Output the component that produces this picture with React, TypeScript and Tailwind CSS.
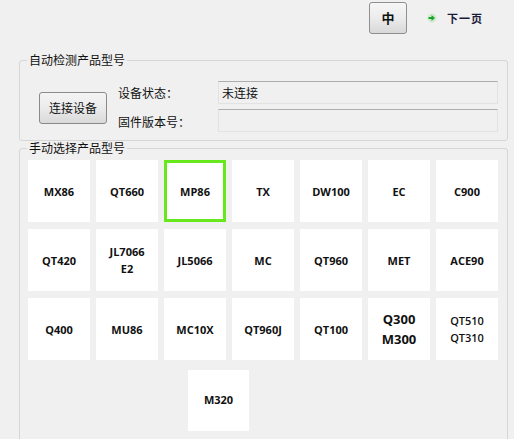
import React from "react";

const cjk = "font-['Microsoft_YaHei','Noto_Sans_CJK_SC',sans-serif]";

type Tile = { lines: string[]; size?: string; selected?: boolean };

const tiles: Tile[] = [
  { lines: ["MX86"] },
  { lines: ["QT660"] },
  { lines: ["MP86"], selected: true },
  { lines: ["TX"] },
  { lines: ["DW100"] },
  { lines: ["EC"] },
  { lines: ["C900"] },
  { lines: ["QT420"] },
  { lines: ["JL7066", "E2"] },
  { lines: ["JL5066"] },
  { lines: ["MC"] },
  { lines: ["QT960"] },
  { lines: ["MET"] },
  { lines: ["ACE90"] },
  { lines: ["Q400"] },
  { lines: ["MU86"] },
  { lines: ["MC10X"] },
  { lines: ["QT960J"] },
  { lines: ["QT100"] },
  { lines: ["Q300", "M300"], size: "big" },
  { lines: ["QT510", "QT310"], size: "small" },
];

function TileBox({ t }: { t: Tile }) {
  const textCls =
    t.size === "big"
      ? "text-[13px] leading-[20px]"
      : t.size === "small"
      ? "text-[11px] leading-[17px] font-semibold"
      : "text-[11px] leading-[17px]";
  return (
    <div
      className={
        "w-[62px] h-[62px] bg-white flex flex-col items-center justify-center text-[#111] font-bold font-['Open_Sans',sans-serif] " +
        (t.selected ? "border-[3px] border-[#66e81c]" : "")
      }
    >
      {t.lines.map((l) => (
        <div key={l} className={textCls}>
          {l}
        </div>
      ))}
    </div>
  );
}

export default function App() {
  return (
    <div className={"w-[514px] h-[439px] bg-[#f0f0f0] overflow-hidden text-[12px] text-[#111] " + cjk}>
      {/* top bar */}
      <div className="flex items-center pl-[369px] pt-[2px] h-[34px]">
        <button className="w-[38px] h-[32px] rounded-[3px] border border-[#8f8f8f] bg-gradient-to-b from-[#f6f6f6] via-[#ececec] to-[#d8d8d8] text-[13px] font-bold flex items-center justify-center">
          中
        </button>
        <svg width="10" height="10" viewBox="0 0 10 10" className="ml-[20px]">
          <circle cx="5" cy="5" r="4.5" fill="#bfe8bf" opacity="0.6" />
          <path d="M1.5 5h4.5" stroke="#1aa52a" strokeWidth="2" />
          <path d="M4.5 2l3.5 3-3.5 3z" fill="#1aa52a" />
        </svg>
        <span className="ml-[10px] text-[11px] font-bold text-[#1a1a3a] tracking-[1px]">下一页</span>
      </div>

      {/* group 1 */}
      <fieldset className="mt-[19px] ml-[19px] w-[489px] border border-[#d6d6d6] rounded-[3px]">
        <legend className="ml-[7px] px-[2px] text-[12px] leading-[14px]">自动检测产品型号</legend>
        <div className="flex pl-[19px] pt-[14px] pb-[8px]">
          <button className="mt-[11px] w-[68px] h-[32px] rounded-[3px] border border-[#8a8a8a] bg-gradient-to-b from-[#f4f4f4] via-[#ebebeb] to-[#d9d9d9] text-[12px]">
            连接设备
          </button>
          <div className="ml-[11px] flex flex-col gap-[5px]">
            <div className="flex items-center h-[23px]">
              <span className="w-[100px] pt-[1px]">设备状态：</span>
              <div className="w-[280px] h-[23px] border border-[#e2e2e2] border-t-[#adadad] bg-[#f0f0f0] flex items-center pl-[3px]">
                未连接
              </div>
            </div>
            <div className="flex items-center h-[23px]">
              <span className="w-[100px] pt-[3px]">固件版本号：</span>
              <div className="w-[280px] h-[23px] border border-[#e2e2e2] border-t-[#adadad] bg-[#f0f0f0]" />
            </div>
          </div>
        </div>
      </fieldset>

      {/* group 2 */}
      <fieldset className="mt-0 ml-[19px] w-[489px] h-[320px] border border-[#d6d6d6] rounded-[3px]">
        <legend className="ml-[7px] px-[2px] text-[12px] leading-[14px]">手动选择产品型号</legend>
        <div className="pl-[8px] pt-[5px]">
          <div className="grid grid-cols-[repeat(7,62px)] gap-x-[6px] gap-y-[7px]">
            {tiles.map((t) => (
              <TileBox key={t.lines.join("-")} t={t} />
            ))}
          </div>
          <div className="mt-[10px] ml-[160px] w-[61px] h-[61px] bg-white flex items-center justify-center text-[11px] font-bold font-['Open_Sans',sans-serif]">
            M320
          </div>
        </div>
      </fieldset>
    </div>
  );
}
